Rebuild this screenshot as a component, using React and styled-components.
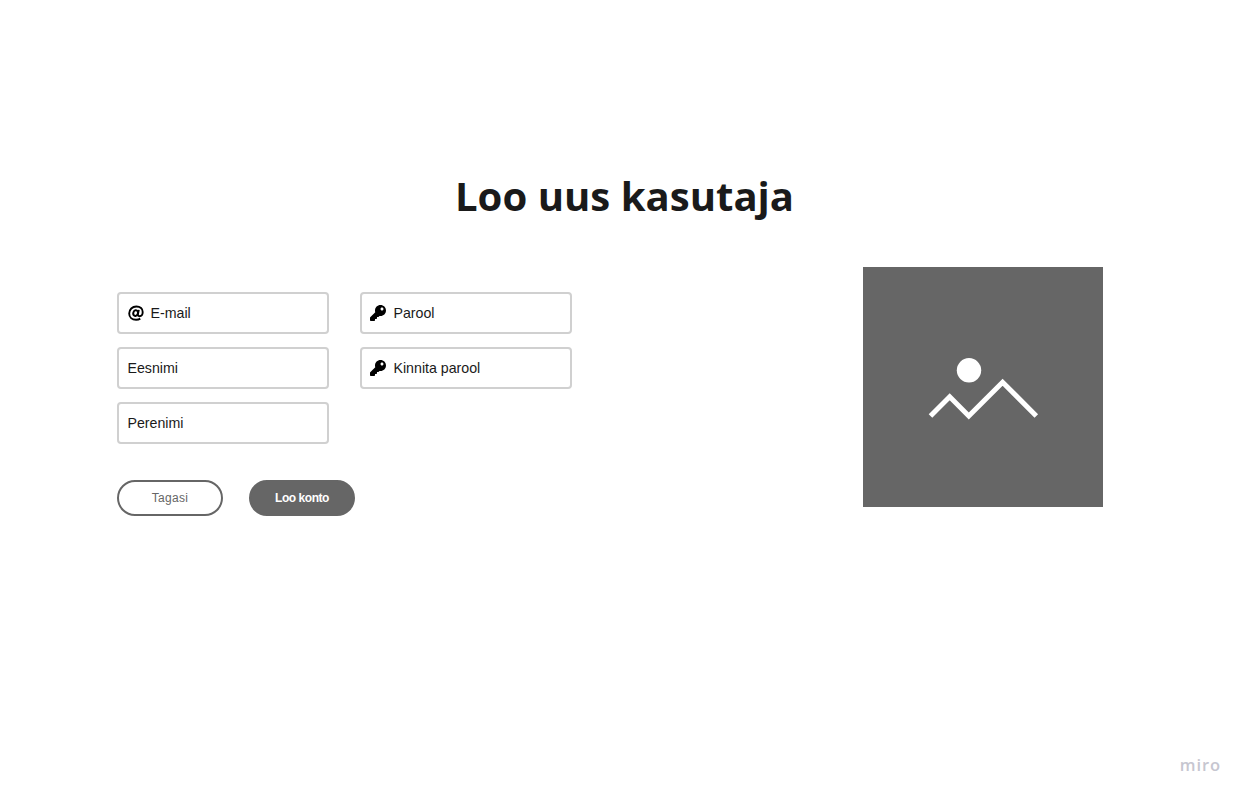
import React from "react";
import styled, { createGlobalStyle } from "styled-components";
import { FaKey } from "react-icons/fa";

const GlobalStyle = createGlobalStyle`
  * { box-sizing: border-box; }
  body { margin: 0; background: #fff; }
`;

const Page = styled.main`
  height: 800px;
  display: flex;
  flex-direction: column;
  padding: 167px 27px 21px 117px;
  overflow: hidden;
  font-family: "Liberation Sans", Arial, sans-serif;
`;

const Title = styled.h1`
  margin: 0 90px 0 0;
  padding-left: 1px;
  height: 57px;
  line-height: 57px;
  text-align: center;
  white-space: nowrap;
  font-family: "Open Sans", sans-serif;
  font-size: 40.1px;
  font-weight: 700;
  color: #1a1a1a;
`;

const Content = styled.div`
  display: flex;
  justify-content: space-between;
  align-items: flex-start;
  margin-top: 43px;
  padding-right: 118px;
`;

const Form = styled.form`
  padding-top: 25px;
`;

const Columns = styled.div`
  display: flex;
  gap: 31px;
`;

const Column = styled.div`
  display: flex;
  flex-direction: column;
  gap: 13px;
`;

const FieldBox = styled.div`
  width: 212px;
  height: 42px;
  display: flex;
  align-items: center;
  gap: 7px;
  padding: 0 8.5px;
  border: 2px solid #d0d0d0;
  border-radius: 4px;
  font-size: 14.2px;
  color: #1a1a1a;
`;

const KeyIcon = styled(FaKey)`
  width: 16px;
  height: 16px;
  margin: 0 0.5px 0 -0.5px;
  color: #000;
`;

const AtSvg = styled.svg`
  width: 16px;
  height: 16px;
  fill: none;
  stroke: #000;
  stroke-width: 1.9px;
`;

const Actions = styled.div`
  display: flex;
  gap: 26px;
  margin-top: 36px;
`;

const Button = styled.button`
  width: 106px;
  height: 36px;
  padding: 0;
  border: 2px solid #666;
  border-radius: 18px;
  background: ${(p) => (p.$primary ? "#666" : "#fff")};
  color: ${(p) => (p.$primary ? "#fff" : "#666")};
  font-family: inherit;
  font-size: 12px;
  font-weight: ${(p) => (p.$primary ? 700 : 400)};
  letter-spacing: ${(p) => (p.$primary ? "-0.45px" : "0.3px")};
`;

const ImagePlaceholder = styled.div`
  width: 240px;
  height: 240px;
  background: #666;

  svg {
    display: block;
  }
`;

const Brand = styled.footer`
  margin-top: auto;
  align-self: flex-end;
  height: 27px;
  line-height: 26px;
  font-family: "Open Sans", sans-serif;
  font-size: 16.5px;
  font-weight: 600;
  letter-spacing: 0.9px;
  color: #c6c6d0;
`;

function AtIcon() {
  return (
    <AtSvg viewBox="0 0 16 16">
      <path d="M12.3 13.6C11.1 14.4 9.7 14.8 8.1 14.8C4 14.8 1.2 12.3 1.2 8.5C1.2 4.4 4.3 1.5 8.4 1.5C12.3 1.5 14.7 3.8 14.7 7C14.7 9.6 13.3 11.2 11.5 11.2C10.2 11.2 9.7 10.5 9.9 9.4L10.8 4.9" />
      <ellipse cx="7.6" cy="8.1" rx="2.3" ry="2.8" transform="rotate(18 7.6 8.1)" />
    </AtSvg>
  );
}

function Field({ icon: Icon, label }) {
  return (
    <FieldBox>
      {Icon && <Icon />}
      <span>{label}</span>
    </FieldBox>
  );
}

export default function App() {
  return (
    <Page>
      <GlobalStyle />
      <Title>Loo uus kasutaja</Title>
      <Content>
        <Form>
          <Columns>
            <Column>
              <Field icon={AtIcon} label="E-mail" />
              <Field label="Eesnimi" />
              <Field label="Perenimi" />
            </Column>
            <Column>
              <Field icon={KeyIcon} label="Parool" />
              <Field icon={KeyIcon} label="Kinnita parool" />
            </Column>
          </Columns>
          <Actions>
            <Button type="button">Tagasi</Button>
            <Button type="button" $primary>Loo konto</Button>
          </Actions>
        </Form>
        <ImagePlaceholder>
          <svg width="240" height="240" viewBox="0 0 240 240" fill="none">
            <circle cx="106" cy="103.3" r="12.2" fill="#fff" />
            <path d="M67.5 149 L86.7 129.8 L105.8 149 L139.6 115.2 L173.3 149" stroke="#fff" strokeWidth="5" />
          </svg>
        </ImagePlaceholder>
      </Content>
      <Brand>miro</Brand>
    </Page>
  );
}
